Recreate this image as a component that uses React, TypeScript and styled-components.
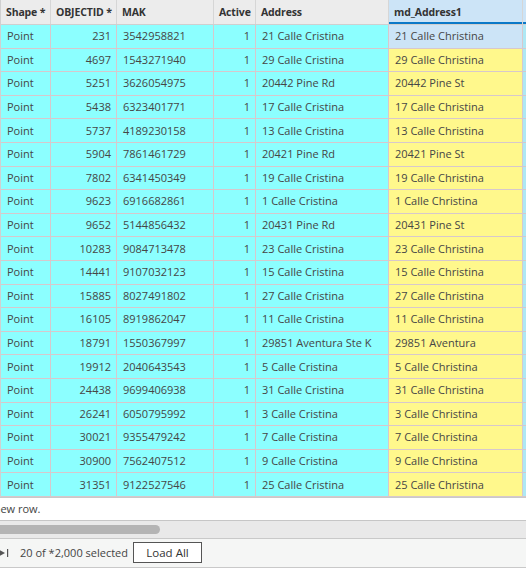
import styled, { createGlobalStyle } from "styled-components";

const GlobalStyle = createGlobalStyle`
  html, body {
    margin: 0;
    padding: 0;
    background: #ffffff;
    overflow: hidden;
  }
  body {
    font-family: "Open Sans", "Noto Sans", sans-serif;
    font-size: 11px;
    color: #444;
  }
`;

const columns = [
  { key: "shape", title: "Shape *", width: 50, align: "left" },
  { key: "id", title: "OBJECTID *", width: 66, align: "right" },
  { key: "mak", title: "MAK", width: 97, align: "left" },
  { key: "active", title: "Active", width: 42, align: "right" },
  { key: "addr", title: "Address", width: 133, align: "left" },
  { key: "md", title: "md_Address1", width: 134, align: "left" },
  { key: "more", title: "", width: 60, align: "left" },
];

const rows = [
  [231, "3542958821", "21 Calle Cristina", "21 Calle Christina"],
  [4697, "1543271940", "29 Calle Cristina", "29 Calle Christina"],
  [5251, "3626054975", "20442 Pine Rd", "20442 Pine St"],
  [5438, "6323401771", "17 Calle Cristina", "17 Calle Christina"],
  [5737, "4189230158", "13 Calle Cristina", "13 Calle Christina"],
  [5904, "7861461729", "20421 Pine Rd", "20421 Pine St"],
  [7802, "6341450349", "19 Calle Cristina", "19 Calle Christina"],
  [9623, "6916682861", "1 Calle Cristina", "1 Calle Christina"],
  [9652, "5144856432", "20431 Pine Rd", "20431 Pine St"],
  [10283, "9084713478", "23 Calle Cristina", "23 Calle Christina"],
  [14441, "9107032123", "15 Calle Cristina", "15 Calle Christina"],
  [15885, "8027491802", "27 Calle Cristina", "27 Calle Christina"],
  [16105, "8919862047", "11 Calle Cristina", "11 Calle Christina"],
  [18791, "1550367997", "29851 Aventura Ste K", "29851 Aventura"],
  [19912, "2040643543", "5 Calle Cristina", "5 Calle Christina"],
  [24438, "9699406938", "31 Calle Cristina", "31 Calle Christina"],
  [26241, "6050795992", "3 Calle Cristina", "3 Calle Christina"],
  [30021, "9355479242", "7 Calle Cristina", "7 Calle Christina"],
  [30900, "7562407512", "9 Calle Cristina", "9 Calle Christina"],
  [31351, "9122527546", "25 Calle Cristina", "25 Calle Christina"],
] as const;

const template = columns.map((c) => `${c.width}px`).join(" ");

const Page = styled.div`
  width: 526px;
  height: 568px;
  overflow: hidden;
  display: flex;
  flex-direction: column;
`;

const Grid = styled.div`
  display: flex;
  flex-direction: column;
  border-left: 1px solid #d0d0d0;
  width: max-content;
`;

const HeaderRow = styled.div`
  display: grid;
  grid-template-columns: ${template};
  height: 25px;
  box-sizing: border-box;
  background: #ececec;
  border-bottom: 1px solid #cfcfcf;
`;

const HeaderCell = styled.div<{ $selected?: boolean }>`
  box-sizing: border-box;
  padding: 0 3px 0 5px;
  display: flex;
  align-items: center;
  white-space: nowrap;
  overflow: hidden;
  font-weight: 700;
  font-size: 10.5px;
  letter-spacing: -0.15px;
  color: #333;
  border-right: 1px solid #d6d6d6;
  background: ${(p) => (p.$selected ? "#cce4f7" : "transparent")};
  box-shadow: ${(p) => (p.$selected ? "inset 0 -2px 0 #0a78c8" : "none")};
`;

const Row = styled.div`
  display: grid;
  grid-template-columns: ${template};
  height: 23.6px;
  box-sizing: border-box;
  border-bottom: 1px solid #d7c8cc;
`;

type Tone = "cyan" | "yellow" | "selected" | "next";

const toneColor: Record<Tone, string> = {
  cyan: "#8cffff",
  yellow: "#fff88c",
  selected: "#cce4f7",
  next: "#aee8f4",
};

const Cell = styled.div<{ $tone: Tone; $align: string }>`
  box-sizing: border-box;
  padding: 0 5px 1px 6px;
  display: flex;
  align-items: center;
  justify-content: ${(p) => (p.$align === "right" ? "flex-end" : "flex-start")};
  white-space: nowrap;
  overflow: hidden;
  background: ${(p) => toneColor[p.$tone]};
  border-right: 1px solid #d7c8cc;
  color: #464646;
`;

const NewRow = styled.div`
  height: 24px;
  box-sizing: border-box;
  display: flex;
  align-items: center;
  overflow: hidden;
  border-top: 1px solid #c9c9c9;
  border-bottom: 1px solid #c6c6c6;
  white-space: nowrap;
  color: #444;
`;

const ClippedText = styled.span`
  margin-left: -104px;
`;

const ScrollTrack = styled.div`
  height: 18px;
  box-sizing: border-box;
  background: #e9e9e9;
  border-bottom: 1px solid #c9c9c9;
  display: flex;
  align-items: center;
`;

const ScrollThumb = styled.div`
  width: 160px;
  height: 9px;
  background: #b4b4b4;
  border-radius: 0 5px 5px 0;
`;

const Footer = styled.div`
  height: 29px;
  box-sizing: border-box;
  background: #f5f6f5;
  border-bottom: 1px solid #c9c9c9;
  display: flex;
  align-items: center;
  color: #444;
  font-size: 11px;
`;

const LastIcon = styled.svg`
  width: 9px;
  height: 10px;
  margin-right: 11px;
  flex: none;
`;

const Status = styled.span`
  margin-right: 5px;
  white-space: nowrap;
`;

const LoadButton = styled.button`
  font-family: inherit;
  font-size: 11.5px;
  color: #333;
  background: #ffffff;
  border: 1px solid #555;
  height: 21px;
  width: 69px;
  padding: 0;
  border-radius: 0;
`;

const toneFor = (key: string, rowIndex: number): Tone => {
  if (key === "md") return rowIndex === 0 ? "selected" : "yellow";
  if (key === "more") return "next";
  return "cyan";
};

export default function App() {
  return (
    <Page>
      <GlobalStyle />
      <Grid>
        <HeaderRow>
          {columns.map((c) => (
            <HeaderCell key={c.key} $selected={c.key === "md" || c.key === "more"}>
              {c.title}
            </HeaderCell>
          ))}
        </HeaderRow>
        {rows.map((r, i) => {
          const values: Record<string, string | number> = {
            shape: "Point",
            id: r[0],
            mak: r[1],
            active: 1,
            addr: r[2],
            md: r[3],
            more: "",
          };
          return (
            <Row key={r[0]}>
              {columns.map((c) => (
                <Cell key={c.key} $tone={toneFor(c.key, i)} $align={c.align}>
                  {values[c.key]}
                </Cell>
              ))}
            </Row>
          );
        })}
      </Grid>
      <NewRow>
        <ClippedText>Click here to add a new row.</ClippedText>
      </NewRow>
      <ScrollTrack>
        <ScrollThumb />
      </ScrollTrack>
      <Footer>
        <LastIcon viewBox="0 0 9 10">
          <path d="M-2 1 L5 5 L-2 9 Z" fill="#555" />
          <rect x="7" y="1" width="1.2" height="8" fill="#555" />
        </LastIcon>
        <Status>20 of *2,000 selected</Status>
        <LoadButton>Load All</LoadButton>
      </Footer>
    </Page>
  );
}
